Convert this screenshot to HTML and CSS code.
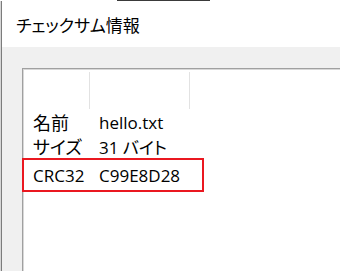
FILE: index.html
```html
<!DOCTYPE html>
<html lang="ja">
<head>
<meta charset="utf-8">
<title>チェックサム情報</title>
<link rel="stylesheet" href="styles.css">
</head>
<body>
<div class="topline"><span class="topline-dark"></span></div>
<div class="window">
  <div class="titlebar">チェックサム情報</div>
  <div class="client">
    <div class="listview">
      <div class="header">
        <div class="hcol hcol-1"></div>
        <div class="hcol hcol-2"></div>
        <div class="hcol hcol-3"></div>
      </div>
      <div class="row">
        <span class="label label-ja">名前</span><span class="value">hello.txt</span>
      </div>
      <div class="row">
        <span class="label label-ja">サイズ</span><span class="value">31 バイト</span>
      </div>
      <div class="row row-highlight">
        <span class="label">CRC32</span><span class="value">C99E8D28</span>
      </div>
    </div>
  </div>
</div>
</body>
</html>
```
FILE: styles.css
```css
html, body {
  margin: 0;
  padding: 0;
  width: 340px;
  height: 271px;
  overflow: hidden;
  background: #ffffff;
}

body {
  display: flex;
  flex-direction: column;
}

.topline {
  height: 1px;
  display: flex;
  flex: none;
}

.topline-dark {
  margin-left: 117px;
  width: 93px;
  background: #3a3a3a;
}

.window {
  flex: 1;
  display: flex;
  flex-direction: column;
  margin-left: 1px;
  border-left: 1px solid #7c7c7c;
  box-shadow: -1px 0 0 #d6d6d6;
}

.titlebar {
  height: 46px;
  flex: none;
  background: #ffffff;
  display: flex;
  align-items: center;
  padding-left: 14px;
  padding-top: 1px;
  box-sizing: border-box;
  font-family: "Noto Sans CJK JP", sans-serif;
  font-feature-settings: "palt";
  font-size: 17px;
  color: #000000;
}

.client {
  flex: 1;
  display: flex;
  flex-direction: column;
  background: #f0f0f0;
  padding: 21px 0 0 20px;
}

.listview {
  flex: 1;
  background: #ffffff;
  border-top: 1px solid #a0a0a0;
  border-left: 1px solid #a0a0a0;
  box-shadow: inset 1px 1px 0 #d8d8d8;
  padding-top: 3px;
  font-family: "Open Sans", "Noto Sans CJK JP", sans-serif;
  font-feature-settings: "palt";
  font-size: 17px;
  color: #000000;
}

.header {
  display: flex;
  height: 37px;
  margin-bottom: 1px;
}

.hcol {
  box-sizing: border-box;
  height: 100%;
}

.hcol-1 {
  width: 67px;
  border-right: 1px solid #e2e2e2;
}

.hcol-2 {
  width: 100px;
  border-right: 1px solid #e2e2e2;
}

.hcol-3 {
  flex: 1;
}

.row {
  display: flex;
  align-items: center;
  height: 24px;
  padding-left: 10px;
  white-space: nowrap;
}

.label {
  width: 66px;
  flex: none;
}

.label-ja {
  font-size: 18px;
}

.row-highlight {
  box-sizing: border-box;
  width: 182px;
  height: 34px;
  margin-left: -1px;
  padding-left: 9px;
  border: 2px solid #ea1820;
}
```
